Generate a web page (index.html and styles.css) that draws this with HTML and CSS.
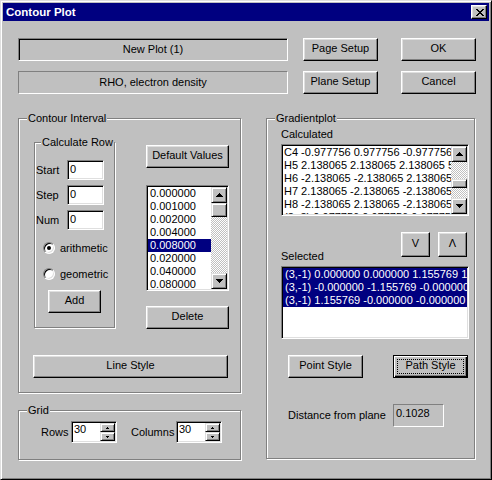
FILE: index.html
```html
<!DOCTYPE html>
<html lang="en">
<head>
    <meta charset="UTF-8">
    <title>Contour Plot</title>
    <link rel="stylesheet" href="styles.css">
</head>
<body>
    <div class="window">
        <!-- Title bar -->
        <div class="titlebar">
            <span class="title">Contour Plot</span>
            <div class="close-btn" role="button" aria-label="Close">
                <svg width="8" height="7" viewBox="0 0 8 7"><path d="M0 0h2v1h1v1h2V1h1V0h2v1H7v1H6v1H5v1h1v1h1v1h1v1H6V6H5V5H3v1H2v1H0V6h1V5h1V4h1V3H2V2H1V1H0z"/></svg>
            </div>
        </div>

        <div class="client">
            <!-- Top fields and buttons -->
            <div class="top-row">
                <div class="top-fields">
                    <div class="static deep">New Plot (1)</div>
                    <div class="static">RHO, electron density</div>
                </div>
                <div class="top-buttons">
                    <div class="btn" role="button">Page Setup</div>
                    <div class="btn" role="button">OK</div>
                    <div class="btn" role="button">Plane Setup</div>
                    <div class="btn" role="button">Cancel</div>
                </div>
            </div>

            <div class="main">
                <div class="main-left">
                    <!-- Contour Interval -->
                    <div class="group contour">
                        <span class="group-label">Contour Interval</span>
                        <div class="contour-top">
                            <div class="group calc-row">
                                <span class="group-label">Calculate Row</span>
                                <div class="field-row"><label>Start</label><input class="text-input" value="0"></div>
                                <div class="field-row"><label>Step</label><input class="text-input" value="0"></div>
                                <div class="field-row"><label>Num</label><input class="text-input" value="0"></div>
                                <div class="radio-row first"><span class="radio checked"></span>arithmetic</div>
                                <div class="radio-row"><span class="radio"></span>geometric</div>
                                <div class="btn add-btn" role="button">Add</div>
                            </div>
                            <div class="contour-side">
                                <div class="btn" role="button">Default Values</div>
                                <div class="listbox values-list">
                                    <div class="list-items">
                                        <div class="item">0.000000</div>
                                        <div class="item">0.001000</div>
                                        <div class="item">0.002000</div>
                                        <div class="item">0.004000</div>
                                        <div class="item selected">0.008000</div>
                                        <div class="item">0.020000</div>
                                        <div class="item">0.040000</div>
                                        <div class="item">0.080000</div>
                                    </div>
                                    <div class="scrollbar">
                                        <span class="sb-btn"><svg width="7" height="4" viewBox="0 0 7 4"><path d="M3 0h1v1h1v1h1v1h1v1H0V3h1V2h1V1h1z"/></svg></span>
                                        <span class="sb-thumb values-thumb"></span>
                                        <span class="sb-track"></span>
                                        <span class="sb-btn"><svg width="7" height="4" viewBox="0 0 7 4"><path d="M0 0h7v1H6v1H5v1H4v1H3V3H2V2H1V1H0z"/></svg></span>
                                    </div>
                                </div>
                                <div class="btn delete-btn" role="button">Delete</div>
                            </div>
                        </div>
                        <div class="btn line-style-btn" role="button">Line Style</div>
                    </div>

                    <!-- Grid -->
                    <div class="group grid-box">
                        <span class="group-label">Grid</span>
                        <label class="grid-label">Rows</label>
                        <div class="spin-field">
                            <input value="30">
                            <div class="spinner">
                                <span class="spin-btn"><svg width="3" height="2" viewBox="0 0 3 2"><path d="M1 0h1v1h1v1H0V1h1z"/></svg></span>
                                <span class="spin-btn"><svg width="3" height="2" viewBox="0 0 3 2"><path d="M0 0h3v1H2v1H1V1H0z"/></svg></span>
                            </div>
                        </div>
                        <label class="grid-label columns">Columns</label>
                        <div class="spin-field">
                            <input value="30">
                            <div class="spinner">
                                <span class="spin-btn"><svg width="3" height="2" viewBox="0 0 3 2"><path d="M1 0h1v1h1v1H0V1h1z"/></svg></span>
                                <span class="spin-btn"><svg width="3" height="2" viewBox="0 0 3 2"><path d="M0 0h3v1H2v1H1V1H0z"/></svg></span>
                            </div>
                        </div>
                    </div>
                </div>

                <!-- Gradientplot -->
                <div class="group gradient">
                    <span class="group-label">Gradientplot</span>
                    <div class="list-label">Calculated</div>
                    <div class="listbox calc-list">
                        <div class="list-items">
                            <div class="item">C4 -0.977756 0.977756 -0.977756</div>
                            <div class="item">H5 2.138065 2.138065 2.138065 5</div>
                            <div class="item">H6 -2.138065 -2.138065 2.138065</div>
                            <div class="item">H7 2.138065 -2.138065 -2.138065</div>
                            <div class="item">H8 -2.138065 2.138065 -2.138065</div>
                            <div class="item">(3,-3) 0.977756 0.977756 0.977756</div>
                        </div>
                        <div class="scrollbar">
                            <span class="sb-btn"><svg width="7" height="4" viewBox="0 0 7 4"><path d="M3 0h1v1h1v1h1v1h1v1H0V3h1V2h1V1h1z"/></svg></span>
                            <span class="sb-track calc-track"></span>
                            <span class="sb-thumb calc-thumb"></span>
                            <span class="sb-track"></span>
                            <span class="sb-btn"><svg width="7" height="4" viewBox="0 0 7 4"><path d="M0 0h7v1H6v1H5v1H4v1H3V3H2V2H1V1H0z"/></svg></span>
                        </div>
                    </div>

                    <div class="sel-row">
                        <div class="list-label">Selected</div>
                        <div class="move-buttons">
                            <div class="btn move-btn" role="button">V</div>
                            <div class="btn move-btn" role="button">&Lambda;</div>
                        </div>
                    </div>
                    <div class="listbox sel-list">
                        <div class="list-items">
                            <div class="item selected">(3,-1) 0.000000 0.000000 1.155769 17</div>
                            <div class="item selected">(3,-1) -0.000000 -1.155769 -0.000000 1</div>
                            <div class="item selected">(3,-1) 1.155769 -0.000000 -0.000000 1</div>
                        </div>
                    </div>

                    <div class="style-row">
                        <div class="btn" role="button">Point Style</div>
                        <div class="btn default" role="button">Path Style</div>
                    </div>

                    <div class="dist-row">
                        <span class="dist-label">Distance from plane</span>
                        <div class="readonly">0.1028</div>
                    </div>
                </div>
            </div>
        </div>
    </div>
</body>
</html>
```

FILE: styles.css
```css
:root {
    --face: #c0c0c0;
    --light: #dfdfdf;
    --shadow: #808080;
    --select: #000080;
}

* {
    box-sizing: border-box;
}

body {
    margin: 0;
    background: var(--face);
    font-family: "Liberation Sans", Arial, sans-serif;
    font-size: 11px;
    line-height: 13px;
    color: #000;
}

input {
    -webkit-appearance: none;
    appearance: none;
    font-family: inherit;
    font-size: 11px;
    line-height: 13px;
    color: #000;
    margin: 0;
}

/* Window frame */
.window {
    width: 492px;
    height: 480px;
    padding: 2px;
    border: 1px solid;
    border-color: var(--light) #000 #000 var(--light);
    box-shadow: inset 1px 1px #fff, inset -1px -1px var(--shadow);
}

.titlebar {
    height: 18px;
    background: var(--select);
    color: #fff;
    display: flex;
    align-items: center;
    justify-content: space-between;
    padding: 0 2px 0 3px;
}

.title {
    font-weight: bold;
    font-size: 11.5px;
}

.close-btn {
    width: 16px;
    height: 14px;
    padding: 0 0 0 1px;
    background: var(--face);
    border: 1px solid;
    border-color: #fff #000 #000 #fff;
    box-shadow: inset -1px -1px var(--shadow), inset 1px 1px var(--light);
    display: flex;
    align-items: center;
    justify-content: center;
}

.client {
    padding: 17px 0 0 15px;
}

/* Buttons and fields */
.btn {
    height: 23px;
    padding: 0 0 2px;
    background: var(--face);
    border: 1px solid;
    border-color: #fff #000 #000 #fff;
    box-shadow: inset -1px -1px var(--shadow), inset 1px 1px var(--light);
    display: flex;
    align-items: center;
    justify-content: center;
    white-space: nowrap;
}

.btn.default {
    position: relative;
    border-color: #000;
    box-shadow: inset 1px 1px #fff, inset -1px -1px #000, inset -2px -2px var(--shadow);
}

.btn.default::after {
    content: "";
    position: absolute;
    inset: 3px;
    border: 1px dotted #000;
}

.static {
    height: 23px;
    border: 1px solid;
    border-color: var(--shadow) #fff #fff var(--shadow);
    display: flex;
    align-items: center;
    justify-content: center;
}

.static.deep {
    box-shadow: inset 1px 1px #000;
}

.top-row {
    display: flex;
}

.top-fields {
    width: 270px;
    display: flex;
    flex-direction: column;
    gap: 10px;
}

.top-buttons {
    margin-left: 15px;
    display: grid;
    grid-template-columns: 75px 75px;
    column-gap: 23px;
    row-gap: 10px;
}

/* Group boxes */
.main {
    margin-top: 24px;
    display: flex;
    gap: 25px;
}

.main-left {
    width: 223px;
    display: flex;
    flex-direction: column;
    gap: 17px;
}

.group {
    position: relative;
    border: 1px solid var(--shadow);
    box-shadow: inset 1px 1px #fff, 1px 1px #fff;
}

.group-label {
    position: absolute;
    top: -7px;
    left: 8px;
    padding: 0 1px;
    background: var(--face);
    white-space: nowrap;
}

/* Contour Interval */
.contour {
    height: 275px;
    padding: 23px 0 0 15px;
}

.contour-top {
    display: flex;
}

.calc-row {
    width: 81px;
    height: 186px;
    padding: 17px 0 0 1px;
}

.calc-row .group-label {
    left: 6px;
}

.field-row {
    display: flex;
    align-items: center;
    height: 20px;
}

.field-row + .field-row {
    margin-top: 5px;
}

.field-row label {
    width: 31px;
}

.text-input {
    width: 37px;
    height: 20px;
    padding: 0 2px 2px;
    background: #fff;
    border: 1px solid;
    border-color: var(--shadow) #fff #fff var(--shadow);
    box-shadow: inset 1px 1px #000, inset -1px -1px var(--light);
    outline: none;
}

.radio-row {
    display: flex;
    align-items: flex-start;
    gap: 5px;
    height: 13px;
    padding-left: 7px;
    margin-top: 13px;
}

.radio-row.first {
    margin-top: 12px;
}

.radio {
    position: relative;
    width: 12px;
    height: 12px;
    border-radius: 50%;
    background: #fff;
    border: 1px solid;
    border-color: var(--shadow) #fff #fff var(--shadow);
    box-shadow: inset 1px 1px #000, inset -1px -1px var(--light);
}

.radio.checked::after {
    content: "";
    position: absolute;
    left: 3px;
    top: 3px;
    width: 4px;
    height: 4px;
    border-radius: 50%;
    background: #000;
}

.add-btn {
    width: 53px;
    margin: 9px 0 0 12px;
}

.contour-side {
    width: 83px;
    margin-left: 31px;
    padding-top: 3px;
    display: flex;
    flex-direction: column;
}

.values-list {
    height: 106px;
    margin-top: 17px;
}

.delete-btn {
    margin-top: 15px;
}

.line-style-btn {
    width: 195px;
    margin: 26px 0 0 -1px;
}

/* List boxes */
.listbox {
    display: flex;
    padding: 1px;
    background: #fff;
    border: 1px solid;
    border-color: var(--shadow) #fff #fff var(--shadow);
    box-shadow: inset 1px 1px #000, inset -1px -1px var(--light);
    overflow: hidden;
}

.list-items {
    flex: 1;
    min-width: 0;
    overflow: hidden;
}

.item {
    height: 13px;
    padding-left: 2px;
    white-space: nowrap;
    overflow: hidden;
}

.item.selected {
    background: var(--select);
    color: #fff;
}

.scrollbar {
    width: 16px;
    display: flex;
    flex-direction: column;
}

.sb-btn,
.sb-thumb,
.spin-btn {
    background: var(--face);
    border: 1px solid;
    border-color: var(--light) #000 #000 var(--light);
    box-shadow: inset 1px 1px #fff, inset -1px -1px var(--shadow);
}

.sb-btn {
    height: 16px;
    flex: none;
    display: flex;
    align-items: center;
    justify-content: center;
}

.sb-track {
    flex: 1;
    background: repeating-conic-gradient(var(--face) 0 25%, #fff 0 50%) 0 0 / 2px 2px;
}

.values-thumb {
    height: 14px;
}

.calc-track {
    flex: none;
    height: 17px;
}

.calc-thumb {
    height: 9px;
}

/* Grid */
.grid-box {
    height: 50px;
    padding: 10px 0 0 22px;
    display: flex;
    align-items: flex-start;
}

.grid-label {
    width: 30px;
    line-height: 22px;
}

.grid-label.columns {
    width: 45px;
    margin-left: 14px;
}

.spin-field {
    width: 46px;
    height: 22px;
    padding: 1px;
    display: flex;
    background: #fff;
    border: 1px solid;
    border-color: var(--shadow) #fff #fff var(--shadow);
    box-shadow: inset 1px 1px #000, inset -1px -1px var(--light);
}

.spin-field input {
    flex: 1;
    min-width: 0;
    height: 13px;
    padding: 0 0 0 1px;
    border: none;
    background: transparent;
    outline: none;
}

.spinner {
    width: 15px;
    display: flex;
    flex-direction: column;
}

.spin-btn {
    flex: 1;
    display: flex;
    align-items: center;
    justify-content: center;
}

/* Gradientplot */
.gradient {
    width: 209px;
    height: 341px;
    padding: 9px 0 0 14px;
}

.calc-list {
    width: 188px;
    height: 72px;
    margin-top: 3px;
}

.calc-list .item {
    padding-left: 1px;
}

.sel-row {
    width: 188px;
    height: 34px;
    margin-top: 16px;
    display: flex;
    justify-content: space-between;
}

.sel-row .list-label {
    align-self: flex-end;
    margin-bottom: 3px;
}

.move-buttons {
    display: flex;
    gap: 8px;
    margin-right: 2px;
}

.move-btn {
    width: 29px;
    height: 25px;
}

.sel-list {
    width: 188px;
    height: 73px;
}

.style-row {
    display: flex;
    gap: 30px;
    margin-top: 16px;
    padding-left: 7px;
}

.style-row .btn {
    width: 75px;
}

.dist-row {
    display: flex;
    align-items: center;
    margin-top: 26px;
    padding-left: 7px;
}

.dist-label {
    width: 105px;
}

.readonly {
    width: 51px;
    height: 23px;
    padding: 2px 2px 0;
    border: 1px solid;
    border-color: var(--shadow) #fff #fff var(--shadow);
}
```
